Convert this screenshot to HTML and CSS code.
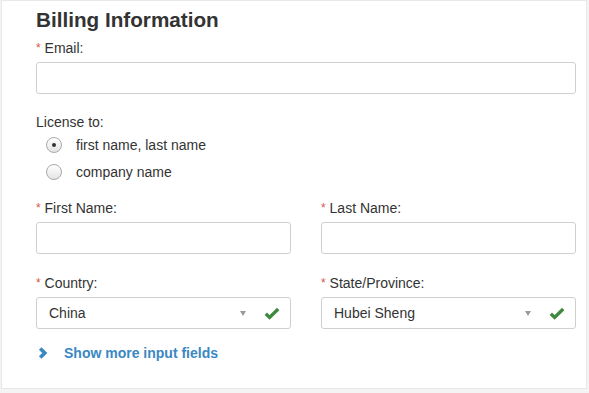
FILE: index.html
```html
<!DOCTYPE html>
<html lang="en">
<head>
    <meta charset="UTF-8">
    <title>Billing Information</title>
    <link rel="stylesheet" href="styles.css">
</head>
<body>
    <div class="card">
        <h1>Billing Information</h1>

        <div class="field field-email">
            <label><span class="req">*</span> Email:</label>
            <div class="input"></div>
        </div>

        <div class="license">
            <div class="license-title">License to:</div>
            <div class="radio-row">
                <span class="radio checked"></span>
                <span>first name, last name</span>
            </div>
            <div class="radio-row">
                <span class="radio"></span>
                <span>company name</span>
            </div>
        </div>

        <div class="row row-names">
            <div class="field">
                <label><span class="req">*</span> First Name:</label>
                <div class="input"></div>
            </div>
            <div class="field">
                <label><span class="req">*</span> Last Name:</label>
                <div class="input"></div>
            </div>
        </div>

        <div class="row row-place">
            <div class="field">
                <label><span class="req">*</span> Country:</label>
                <div class="input select">
                    <span class="value">China</span>
                    <span class="caret"></span>
                    <svg class="check" width="16" height="13" viewBox="0 0 16 13">
                        <path d="M1.8 6.8 L5.6 10.4 L14.2 2" fill="none" stroke="#3f8a40" stroke-width="3.4"/>
                    </svg>
                </div>
            </div>
            <div class="field">
                <label><span class="req">*</span> State/Province:</label>
                <div class="input select">
                    <span class="value">Hubei Sheng</span>
                    <span class="caret"></span>
                    <svg class="check" width="16" height="13" viewBox="0 0 16 13">
                        <path d="M1.8 6.8 L5.6 10.4 L14.2 2" fill="none" stroke="#3f8a40" stroke-width="3.4"/>
                    </svg>
                </div>
            </div>
        </div>

        <a class="more" href="#">
            <svg width="10" height="12" viewBox="0 0 10 12">
                <path d="M2.2 1.5 L6.8 6 L2.2 10.5" fill="none" stroke="#3a88c2" stroke-width="3.6"/>
            </svg>
            <span>Show more input fields</span>
        </a>
    </div>
</body>
</html>
```

FILE: styles.css
```css
body {
    margin: 0;
    padding: 0 0 0 1px;
    background: #f4f4f4;
    font-family: "Liberation Sans", Arial, sans-serif;
    font-size: 14px;
    color: #333;
}
.card {
    box-sizing: border-box;
    width: 586px;
    height: 389px;
    background: #fff;
    border: 1px solid #e8e8e8;
    padding: 7px 10px 0 34px;
}
h1 {
    margin: 0;
    font-size: 20.7px;
    line-height: 24px;
    font-weight: bold;
    color: #333;
}
.field label {
    display: block;
    line-height: 16px;
    margin-bottom: 6px;
}
.req {
    color: #d9534f;
    font-size: 12px;
    vertical-align: 1px;
}
.field-email {
    margin-top: 8px;
}
.input {
    box-sizing: border-box;
    height: 32px;
    border: 1px solid #cfcfcf;
    border-radius: 3px;
    background: #fff;
}
.license {
    margin-top: 20px;
}
.license-title {
    line-height: 16px;
}
.radio-row {
    display: flex;
    align-items: center;
    height: 27px;
    padding-left: 10px;
    gap: 14px;
}
.license-title + .radio-row {
    margin-top: 1px;
}
.radio {
    box-sizing: border-box;
    width: 16px;
    height: 16px;
    border-radius: 50%;
    border: 1px solid #a9a9a9;
    background: linear-gradient(#ffffff, #e4e4e4);
    display: flex;
    align-items: center;
    justify-content: center;
}
.radio.checked::after {
    content: '';
    width: 4px;
    height: 4px;
    border-radius: 50%;
    background: #333;
}
.row {
    display: grid;
    grid-template-columns: 1fr 1fr;
    gap: 30px;
}
.row-names {
    margin-top: 15px;
}
.row-place {
    margin-top: 21px;
}
.select {
    display: flex;
    align-items: center;
    padding: 0 10px 0 12px;
}
.select .value {
    flex: 1;
}
.caret {
    width: 0;
    height: 0;
    border-left: 3px solid transparent;
    border-right: 3px solid transparent;
    border-top: 5px solid #9a9a9a;
    margin-right: 18px;
}
.more {
    display: flex;
    align-items: center;
    gap: 16px;
    margin-top: 16px;
    padding-left: 2px;
    line-height: 16px;
    font-weight: bold;
    color: #3a88c2;
    text-decoration: none;
}
```
